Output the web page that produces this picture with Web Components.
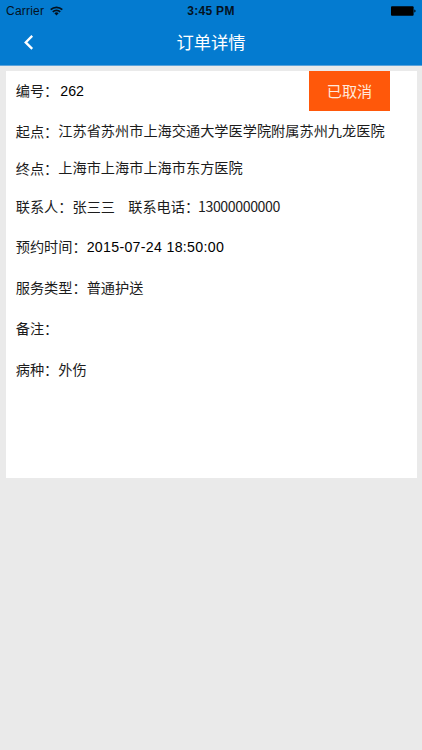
<!DOCTYPE html>
<html lang="zh-CN">
<head>
<meta charset="utf-8">
<title>订单详情</title>
<style>
  :root {
    --primary-color: #047bd0;
    --page-color: #eaeaea;
    --surface-color: #fff;
    --status-color: #ff580a;
    --text-color: #1c1c1c;
    --font-cjk: "Noto Sans CJK SC", sans-serif;
    --font-latin: "Liberation Sans", "Noto Sans CJK SC", sans-serif;
  }
  body {
    margin: 0;
    background: var(--page-color);
    color: var(--text-color);
    font-family: var(--font-cjk);
  }
</style>
</head>
<body>
<order-page></order-page>

<script>
class StatusBar extends HTMLElement {
  constructor() {
    super();
    this.attachShadow({ mode: "open" });
  }

  connectedCallback() {
    this.shadowRoot.innerHTML = `
      <style>
        :host {
          display: grid;
          grid-template-columns: 1fr auto 1fr;
          align-items: center;
          height: 22px;
          padding: 0 6px;
          box-sizing: border-box;
          color: #04121f;
          font: 12px/22px var(--font-latin);
        }
        .left {
          display: flex;
          align-items: center;
          gap: 5.5px;
          letter-spacing: 0.22px;
        }
        .time {
          font-weight: bold;
          font-size: 12px;
          letter-spacing: 0.3px;
        }
        .battery {
          justify-self: end;
        }
        svg {
          display: block;
        }
      </style>
      <div class="left">
        <span>Carrier</span>
        <svg width="13" height="10" viewBox="0 0 13 10" fill="none" stroke="currentColor" stroke-width="1.7">
          <path d="M0.7 3.7a8.2 8.2 0 0 1 11.6 0"/>
          <path d="M2.8 5.9a5.2 5.2 0 0 1 7.4 0"/>
          <path d="M6.5 9.4L4.4 7.3a3 3 0 0 1 4.2 0z" fill="currentColor" stroke="none"/>
        </svg>
      </div>
      <span class="time">3:45 PM</span>
      <svg class="battery" width="25" height="10" viewBox="0 0 25 10" fill="#000">
        <rect x="0" y="0.2" width="22.6" height="9.6" rx="1"/>
        <path d="M23.3 3.5c1.7 0.3 1.7 2.7 0 3z"/>
      </svg>
    `;
  }
}

class NavBar extends HTMLElement {
  constructor() {
    super();
    this.attachShadow({ mode: "open" });
  }

  connectedCallback() {
    this.shadowRoot.innerHTML = `
      <style>
        :host {
          display: grid;
          grid-template-columns: 1fr auto 1fr;
          align-items: center;
          height: 43px;
          padding-bottom: 3px;
          box-sizing: border-box;
          color: #fff;
          font-size: 17.3px;
          line-height: 40px;
        }
        svg {
          display: block;
          margin-left: 24px;
        }
      </style>
      <svg width="10" height="15" viewBox="0 0 10 15" fill="none" stroke="currentColor" stroke-width="2.3">
        <path d="M8.2 0.9L1.7 7.4L8.2 13.9"/>
      </svg>
      <slot></slot>
    `;
  }
}

class OrderField extends HTMLElement {
  constructor() {
    super();
    this.attachShadow({ mode: "open" });
  }

  connectedCallback() {
    this.shadowRoot.innerHTML = `
      <style>
        :host {
          display: flex;
          height: 20px;
          line-height: 20px;
          font-size: 14.2px;
          white-space: nowrap;
        }
      </style>
      <span>${this.getAttribute("label")}：</span>
      <slot></slot>
    `;
  }
}

class StatusTag extends HTMLElement {
  constructor() {
    super();
    this.attachShadow({ mode: "open" });
  }

  connectedCallback() {
    this.shadowRoot.innerHTML = `
      <style>
        :host {
          display: block;
          width: 81px;
          height: 40.5px;
          background: var(--status-color);
          color: #ffe9dc;
          font-size: 15.2px;
          line-height: 39px;
          text-align: center;
        }
      </style>
      <slot></slot>
    `;
  }
}

class OrderPage extends HTMLElement {
  constructor() {
    super();
    this.attachShadow({ mode: "open" });
  }

  connectedCallback() {
    this.shadowRoot.innerHTML = `
      <style>
        :host {
          display: block;
          min-height: 750px;
        }
        header {
          background: var(--primary-color);
          border-bottom: 1px solid #5ba3db;
        }
        main {
          display: flex;
          flex-direction: column;
          height: 407px;
          margin: 4.5px 5.5px 0;
          box-sizing: border-box;
          padding-left: 10.2px;
          background: var(--surface-color);
        }
        .top {
          display: flex;
          justify-content: space-between;
          height: 50px;
          padding-right: 26.5px;
        }
        .top order-field {
          margin-top: 9px;
        }
        .number, .date {
          margin-top: 1px;
          color: #000;
          font-family: var(--font-latin);
        }
        .number {
          margin-left: 2px;
        }
        .date {
          letter-spacing: 0.3px;
        }
        .place {
          position: relative;
          top: -1px;
        }
        .contact {
          display: flex;
          gap: 13.2px;
          margin: 18px 0 20px;
        }
        .phone {
          margin-left: -1.2px;
          letter-spacing: -0.42px;
        }
        .rest {
          display: flex;
          flex-direction: column;
          gap: 21px;
        }
      </style>
      <header>
        <status-bar></status-bar>
        <nav-bar>订单详情</nav-bar>
      </header>
      <main>
        <div class="top">
          <order-field label="编号"><span class="number">262</span></order-field>
          <status-tag>已取消</status-tag>
        </div>
        <order-field label="起点"><span class="place">江苏省苏州市上海交通大学医学院附属苏州九龙医院</span></order-field>
        <order-field label="终点" style="margin-top: 17px"><span class="place">上海市上海市上海市东方医院</span></order-field>
        <div class="contact">
          <order-field label="联系人"><span>张三三</span></order-field>
          <order-field label="联系电话"><span class="phone">13000000000</span></order-field>
        </div>
        <div class="rest">
          <order-field label="预约时间"><span class="date">2015-07-24 18:50:00</span></order-field>
          <order-field label="服务类型"><span>普通护送</span></order-field>
          <order-field label="备注"></order-field>
          <order-field label="病种"><span>外伤</span></order-field>
        </div>
      </main>
    `;
  }
}

customElements.define("status-bar", StatusBar);
customElements.define("nav-bar", NavBar);
customElements.define("order-field", OrderField);
customElements.define("status-tag", StatusTag);
customElements.define("order-page", OrderPage);
</script>
</body>
</html>
